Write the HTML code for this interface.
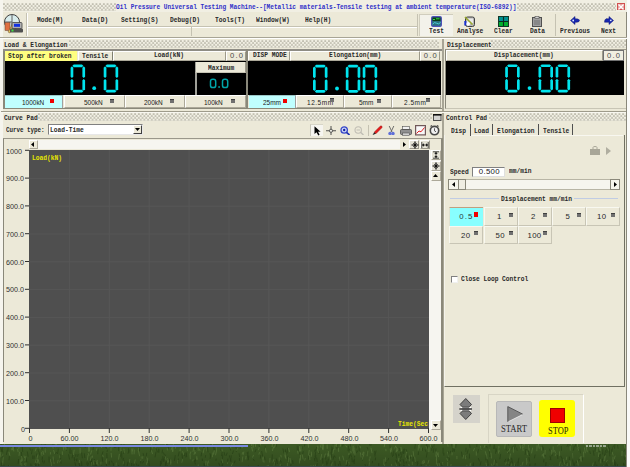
<!DOCTYPE html>
<html><head><meta charset="utf-8">
<style>
*{margin:0;padding:0;box-sizing:border-box}
html,body{width:630px;height:467px;overflow:hidden;background:#F4F3EE}
body{position:relative;font-family:"Liberation Mono",monospace}
.a{position:absolute}
.t{position:absolute;font:bold 7.6px/7px "Liberation Mono",monospace;color:#282828;white-space:nowrap;transform:scaleX(.82);transform-origin:0 0}
.s{position:absolute;font:7.2px/7px "Liberation Sans",sans-serif;color:#303030;white-space:nowrap}
.chk{position:absolute;background-color:#EEEBDE;background-image:radial-gradient(circle at 50% 50%,#B0AD9D 0,#B0AD9D .6px,rgba(176,173,157,0) 1.2px),radial-gradient(circle at 50% 50%,#B0AD9D 0,#B0AD9D .6px,rgba(176,173,157,0) 1.2px);background-size:3.7px 3.7px;background-position:0 0,1.85px 1.85px}
.btn{position:absolute;background:#ECE9D8;border-right:1px solid #ACA899;border-bottom:1px solid #ACA899;border-left:1px solid #FFFFFF;border-top:1px solid #FFFFFF}
.hdr{position:absolute;background:#ECE9D8;border-right:1px solid #9D9A8A;border-bottom:1px solid #ACA899;border-left:1px solid #FFF;border-top:1px solid #FFF}
.blk{position:absolute;background:#000}
.sq{position:absolute;width:4px;height:4px;background:#707070;border-top:1px solid #404040}
.sqr{position:absolute;width:4px;height:4.5px;background:#F00000}
</style></head><body><svg width="0" height="0" style="position:absolute"><defs><pattern id="chkp" width="3.7" height="3.8" patternUnits="userSpaceOnUse"><rect width="3.7" height="3.8" fill="#F2F0E4"/><circle cx=".95" cy="1" r=".85" fill="#A4A292"/><circle cx="2.8" cy="2.9" r=".85" fill="#A4A292"/></pattern></defs></svg>
<!-- window -->
<div class="a" style="left:0;top:0;width:627px;height:444px;background:#ECE9D8;border-right:1px solid #8A887A"></div>
<div class="a" style="left:0;top:0;width:2.5px;height:444px;background:#F6F5EE"></div>
<!-- title bar --><div class="a" style="left:2.5px;top:0;width:624px;height:12px;background:#F1EFE3"></div>
<svg class="a" style="left:2.5px;top:2.5px" width="113" height="8"><rect width="100%" height="100%" fill="url(#chkp)"/></svg>
<div class="t" style="left:116px;top:3.5px;color:#3030C8;transform:scaleX(.806)">Oil Pressure Universal Testing Machine--[Metallic materials-Tensile testing at ambient temperature(ISO-6892)]</div>
<svg class="a" style="left:517px;top:2.5px" width="99" height="8"><rect width="100%" height="100%" fill="url(#chkp)"/></svg>
<div class="a" style="left:617px;top:2.5px;width:8px;height:7.5px;background:#E8A0A0;border:1px solid #D05050"></div>
<svg class="a" style="left:617px;top:2.5px" width="8" height="8"><path d="M1.5 1.5L6.5 6.5M6.5 1.5L1.5 6.5" stroke="#fff" stroke-width="1.3"/></svg>


<!-- toolbar -->
<svg class="a" style="left:3px;top:13px" width="22" height="21" viewBox="0 0 22 21">
 <circle cx="9" cy="9" r="7.5" fill="#D8ECEC" stroke="#404040" stroke-width="1"/>
 <path d="M9 1.5V16.5M1.5 9H9" stroke="#606060" stroke-width="1"/>
 <rect x="2" y="9.5" width="5" height="8" fill="#E07040" stroke="#604030" stroke-width=".5"/>
 <path d="M5 19L10 10L12 11L7 20Z" fill="#E0C060" stroke="#705020" stroke-width=".5"/>
 <rect x="9" y="9.5" width="10" height="6" rx="1" fill="#B0B0B0" stroke="#404040" stroke-width=".8"/>
 <rect x="11" y="10.8" width="6" height="3" fill="#1030E0"/>
 <rect x="7" y="15.5" width="13" height="4" rx="1" fill="#505050"/>
 <rect x="8.5" y="16.5" width="2" height="2" fill="#40E040"/>
</svg>
<div class="a" style="left:26px;top:13px;width:1px;height:23px;background:#C5C2B2"></div>
<div class="a" style="left:27px;top:13px;width:1px;height:23px;background:#FFF"></div>
<div class="t" style="left:37px;top:16.6px">Mode(M)</div>
<div class="t" style="left:82px;top:16.6px">Data(D)</div>
<div class="t" style="left:121px;top:16.6px">Setting(S)</div>
<div class="t" style="left:169.5px;top:16.6px">Debug(D)</div>
<div class="t" style="left:214.5px;top:16.6px">Tools(T)</div>
<div class="t" style="left:256px;top:16.6px">Window(W)</div>
<div class="t" style="left:305px;top:16.6px">Help(H)</div>
<div class="a" style="left:28px;top:26px;width:389px;height:1px;background:#C5C2B2"></div>
<div class="a" style="left:28px;top:27px;width:389px;height:1px;background:#FFF"></div>
<div class="a" style="left:190.5px;top:27px;width:1px;height:9px;background:#C5C2B2"></div>
<div class="a" style="left:417px;top:14px;width:1px;height:22px;background:#C5C2B2"></div>
<!-- Test pressed -->
<div class="a" style="left:419px;top:14px;width:34px;height:22px;background:#F3F2EA;border-left:1px solid #D0CDBD;border-top:1px solid #D0CDBD"></div>
<svg class="a" style="left:431px;top:16px" width="11" height="11"><rect x=".6" y=".6" width="9.8" height="9.8" rx="1.5" fill="#2A7080" stroke="#5050B8" stroke-width="1.2"/><rect x="1.5" y="1.5" width="8" height="3.5" fill="#0C3A18"/><path d="M2 3.5H4M5 2.8H8.5" stroke="#30E040" stroke-width="1"/><path d="M1.5 8.2Q3.5 5.5 5.5 7.2T9.5 6.5" stroke="#50D8E0" stroke-width=".9" fill="none"/></svg>
<div class="t" style="left:428.5px;top:28px">Test</div>
<svg class="a" style="left:464px;top:16px" width="11" height="11"><rect x="1.5" y="1" width="9" height="9.5" rx="2" fill="#B8B8B8" stroke="#404040"/><rect x="3" y="2.5" width="6" height="5" fill="#E8E8E8"/><path d="M1 1L8.5 8.5" stroke="#98A830" stroke-width="1.6"/><rect x=".3" y="5" width="2" height="4.5" fill="#1830D0"/><circle cx="4.2" cy="8" r="1.8" fill="#FFF"/></svg>
<div class="t" style="left:456.5px;top:28px">Analyse</div>
<svg class="a" style="left:497.5px;top:16px" width="11" height="11"><rect x="0" y="0" width="11" height="5.5" fill="#00908F"/><rect x="0" y="5.5" width="11" height="5.5" fill="#00B030"/><path d="M5.5 0V11M0 5.5H11" stroke="#0A2A20" stroke-width="1.1"/><rect x=".5" y=".5" width="10" height="10" fill="none" stroke="#103828"/></svg>
<div class="t" style="left:493.5px;top:28px">Clear</div>
<svg class="a" style="left:532px;top:16px" width="10" height="11"><rect x=".5" y="1.5" width="9" height="9" fill="#A0A0A0" stroke="#505050"/><rect x="3" y=".5" width="4" height="2" fill="#D0D0D0" stroke="#505050" stroke-width=".6"/><path d="M3 4V9M5 4V9M7 4V9" stroke="#707070"/></svg>
<div class="t" style="left:529.5px;top:28px">Data</div>
<div class="a" style="left:555px;top:14px;width:1px;height:22px;background:#C5C2B2"></div>
<svg class="a" style="left:570px;top:16px" width="10" height="9"><path d="M0.5 4.5L5 0.5V2.8Q8 2.5 9.5 4Q9.5 6.2 7 6.2H5V8.5Z" fill="#1828B0" stroke="#0A1070" stroke-width=".5"/><circle cx="3.2" cy="4.5" r=".9" fill="#E0E8FF"/></svg>
<div class="t" style="left:560px;top:28px">Previous</div>
<svg class="a" style="left:603.5px;top:16px" width="10" height="9"><path d="M9.5 4.5L5 0.5V2.8H2Q0.5 3.5 0.5 6.2H5V8.5Z" fill="#1828B0" stroke="#0A1070" stroke-width=".5"/><circle cx="6.8" cy="4.3" r=".9" fill="#E0E8FF"/></svg>
<div class="t" style="left:601px;top:28px">Next</div>
<div class="a" style="left:0;top:37px;width:627px;height:1px;background:#A8A595"></div>
<div class="a" style="left:0;top:38px;width:627px;height:1px;background:#FFF"></div>

<!-- Load & Elongation header -->
<div class="t" style="left:3.5px;top:41.5px">Load &amp; Elongation</div>
<svg class="a" style="left:69px;top:40px" width="370" height="8"><rect width="100%" height="100%" fill="url(#chkp)"/></svg>
<!-- divider between panels -->
<div class="a" style="left:441.5px;top:39px;width:2.5px;height:405px;background:#A8A595"></div>

<!-- left panel frame -->
<div class="a" style="left:3px;top:49px;width:1.6px;height:60px;background:#8A887A"></div><div class="a" style="left:3px;top:49.2px;width:439px;height:59.8px;border-bottom:1px solid #8A887A"></div><div class="a" style="left:3px;top:49.2px;width:439px;height:1.4px;background:#8E8C84"></div>
<!-- row1 -->
<div class="a" style="left:4.6px;top:50.6px;width:72.9px;height:10.4px;background:#FFFF80"></div>
<div class="t" style="left:8px;top:52.5px">Stop after broken</div>
<div class="hdr" style="left:78px;top:50.6px;width:35px;height:10.4px;border-right:1.5px solid #808070"></div>
<div class="t" style="left:82px;top:52.5px">Tensile</div>
<div class="hdr" style="left:113px;top:50.6px;width:113px;height:10.4px"></div>
<div class="t" style="left:154px;top:51.7px">Load(kN)</div>
<div class="hdr" style="left:226px;top:50.6px;width:20px;height:10.4px"></div>
<div class="s" style="left:230px;top:52px;font-size:7.6px;letter-spacing:1.2px;color:#484848">0.0</div>
<div class="a" style="left:246px;top:49px;width:2px;height:59px;background:#8A887A"></div>
<div class="hdr" style="left:248px;top:50.6px;width:42px;height:10.4px"></div>
<div class="t" style="left:252.5px;top:51.7px">DISP MODE</div>
<div class="hdr" style="left:290px;top:50.6px;width:130px;height:10.4px"></div>
<div class="t" style="left:329px;top:51.7px">Elongation(mm)</div>
<div class="hdr" style="left:420px;top:50.6px;width:20px;height:10.4px"></div>
<div class="s" style="left:423.8px;top:52px;font-size:7.6px;letter-spacing:1.2px;color:#484848">0.0</div>
<!-- black displays -->
<div class="blk" style="left:4.6px;top:61px;width:241.4px;height:34px"></div>
<div class="blk" style="left:248px;top:61px;width:192.5px;height:34px"></div>
<!-- maximum -->
<div class="hdr" style="left:195px;top:62px;width:51px;height:11px;border-left:1.5px solid #A0A098;border-top:none;border-bottom:1px solid #C8C5B5"></div><div class="a" style="left:195px;top:73px;width:1.5px;height:22px;background:#A0A098"></div>
<div class="t" style="left:208px;top:64.5px">Maximum</div>
<svg class="a" style="left:209px;top:78px" width="21" height="11"><g fill="none" stroke="#00A4A8" stroke-width="1.5"><rect x="1.5" y="1.2" width="5.2" height="8.4" rx="2.2"/><rect x="13.5" y="1.2" width="5.2" height="8.4" rx="2.2"/></g><rect x="9.3" y="8.2" width="1.6" height="1.6" fill="#00A4A8"/></svg>
<!-- row3 buttons -->
<div class="a" style="left:4.6px;top:95px;width:58.9px;height:13px;background:#C0FFFF;border-right:1px solid #A0A0A0;border-top:1px solid #9CC8C8"></div>
<div class="s" style="left:22px;top:98.5px;color:#202020;transform:scaleX(.9);transform-origin:0 0">1000kN</div><div class="sqr" style="left:49.5px;top:98.5px"></div>
<div class="btn" style="left:63.5px;top:95px;width:61px;height:13px"></div>
<div class="s" style="left:83.5px;top:98.5px;color:#202020;transform:scaleX(.9);transform-origin:0 0">500kN</div><div class="sq" style="left:109.5px;top:98.5px"></div>
<div class="btn" style="left:124.5px;top:95px;width:60px;height:13px"></div>
<div class="s" style="left:144px;top:98.5px;color:#202020;transform:scaleX(.9);transform-origin:0 0">200kN</div><div class="sq" style="left:170px;top:98.5px"></div>
<div class="btn" style="left:184.5px;top:95px;width:61.5px;height:13px"></div>
<div class="s" style="left:204px;top:98.5px;color:#202020;transform:scaleX(.9);transform-origin:0 0">100kN</div><div class="sq" style="left:230.5px;top:98.5px"></div>
<div class="a" style="left:248.5px;top:95px;width:47px;height:13px;background:#C0FFFF;border-right:1px solid #A0A0A0;border-top:1px solid #9CC8C8"></div>
<div class="s" style="left:263px;top:98.5px;color:#202020;transform:scaleX(.9);transform-origin:0 0">25mm</div><div class="sqr" style="left:282.5px;top:98.5px"></div>
<div class="btn" style="left:295.5px;top:95px;width:48px;height:13px"></div>
<div class="s" style="left:307px;top:98.5px;color:#202020;transform:scaleX(.9);transform-origin:0 0;letter-spacing:.6px">12.5mm</div><div class="sq" style="left:329.5px;top:98px"></div>
<div class="btn" style="left:343.5px;top:95px;width:48px;height:13px"></div>
<div class="s" style="left:359px;top:98.5px;color:#202020;transform:scaleX(.9);transform-origin:0 0">5mm</div><div class="sq" style="left:377px;top:98.5px"></div>
<div class="btn" style="left:391.5px;top:95px;width:49px;height:13px"></div>
<div class="s" style="left:404px;top:98.5px;color:#202020;transform:scaleX(.9);transform-origin:0 0;letter-spacing:.6px">2.5mm</div><div class="sq" style="left:425.5px;top:98px"></div>

<!-- right panel: displacement -->
<div class="t" style="left:446.5px;top:42px">Displacement</div>
<svg class="a" style="left:491px;top:40px" width="135" height="8"><rect width="100%" height="100%" fill="url(#chkp)"/></svg>
<div class="a" style="left:445px;top:48.5px;width:181px;height:60.5px;border-left:1px solid #8A887A;border-top:1px solid #9A978A;border-bottom:1px solid #C8C5B5"></div>
<div class="hdr" style="left:446px;top:50px;width:157px;height:10.5px"></div>
<div class="t" style="left:493.5px;top:51.7px">Displacement(mm)</div>
<div class="hdr" style="left:603px;top:50px;width:21px;height:10.5px;border:1px solid #707070;background:#F0EEE2"></div>
<div class="s" style="left:607px;top:52px;font-size:7.6px;letter-spacing:1.2px;color:#484848">0.0</div>
<div class="blk" style="left:446px;top:60.5px;width:178px;height:34px"></div>

<!-- seven segment digits -->
<svg class="a" style="left:0;top:0" width="630" height="100">
<defs>
<g id="d0" fill="#00E4EE"><polygon points="1.80,1.35 3.15,0.00 11.35,0.00 12.70,1.35 11.35,2.70 3.15,2.70"/><polygon points="1.80,26.65 3.15,25.30 11.35,25.30 12.70,26.65 11.35,28.00 3.15,28.00"/><polygon points="1.35,1.80 2.70,3.15 2.70,12.20 1.35,13.55 0.00,12.20 0.00,3.15"/><polygon points="1.35,14.45 2.70,15.80 2.70,24.85 1.35,26.20 0.00,24.85 0.00,15.80"/><polygon points="13.15,1.80 14.50,3.15 14.50,12.20 13.15,13.55 11.80,12.20 11.80,3.15"/><polygon points="13.15,14.45 14.50,15.80 14.50,24.85 13.15,26.20 11.80,24.85 11.80,15.80"/></g>
</defs>
<use href="#d0" x="70.6" y="64.5"/>
<circle cx="94.2" cy="88.2" r="1.9" fill="#00E4EE"/>
<use href="#d0" x="103.7" y="64.5"/>
<use href="#d0" x="313" y="64.7"/>
<circle cx="337" cy="88.5" r="1.9" fill="#00E4EE"/>
<use href="#d0" x="345.8" y="64.7"/>
<use href="#d0" x="362.7" y="64.7"/>
<use href="#d0" x="505.2" y="64.4"/>
<circle cx="529.5" cy="88.1" r="1.9" fill="#00E4EE"/>
<use href="#d0" x="538.5" y="64.4"/>
<use href="#d0" x="555.6" y="64.4"/>
</svg>


<!-- separator lines under panels -->
<div class="a" style="left:1px;top:111px;width:625px;height:1.2px;background:#9E9B8B"></div><div class="a" style="left:1px;top:112.2px;width:625px;height:.8px;background:#F8F7F0"></div>
<!-- Curve Pad header -->
<div class="t" style="left:3.5px;top:114.5px">Curve Pad</div>
<svg class="a" style="left:38px;top:113px" width="394" height="8"><rect width="100%" height="100%" fill="url(#chkp)"/></svg>
<svg class="a" style="left:433px;top:114px" width="8.5" height="7"><rect x=".5" y=".5" width="7.5" height="6" fill="#D4D4D2" stroke="#505050"/><rect x="0" y="0" width="8.5" height="1.6" fill="#101010"/></svg>
<!-- Control pad header -->
<div class="t" style="left:446px;top:115px">Control Pad</div>
<svg class="a" style="left:489px;top:113px" width="137" height="8"><rect width="100%" height="100%" fill="url(#chkp)"/></svg>

<!-- curve type -->
<div class="t" style="left:6px;top:126.5px;transform:scaleX(.77)">Curve type:</div>
<div class="a" style="left:48px;top:124px;width:95px;height:11px;background:#FFF;border-left:1px solid #808080;border-top:1px solid #808080;border-right:1px solid #E8E8E8;border-bottom:1px solid #E8E8E8"></div>
<div class="t" style="left:50px;top:127px">Load-Time</div>
<div class="btn" style="left:133px;top:125px;width:9px;height:9px;border-right-color:#404040;border-bottom-color:#404040"></div>
<svg class="a" style="left:135px;top:128px" width="6" height="4"><path d="M0 0H5L2.5 3Z" fill="#000"/></svg>

<!-- chart toolbar icons -->
<div class="a" style="left:309.5px;top:123.5px;width:13.5px;height:12.5px;background:#F6F5F0;border-left:1px solid #C8C6B8;border-top:1px solid #D8D6C8"></div>
<svg class="a" style="left:313.5px;top:126px" width="7" height="10"><path d="M0.5 0.3V8L2.5 6.3L4.3 9.5L5.6 8.8L4 5.8H6.6Z" fill="#000"/></svg>
<svg class="a" style="left:326px;top:125.5px" width="10" height="9.5"><path d="M5 0V9.5M0 4.75H10" stroke="#404040" stroke-width=".9"/><circle cx="5" cy="4.75" r="1.6" fill="#E8E8E0" stroke="#404040" stroke-width=".8"/></svg>
<svg class="a" style="left:339.5px;top:125.5px" width="10" height="9.5"><circle cx="4.2" cy="4" r="3.2" fill="#D0D8F8" stroke="#3848C8" stroke-width="1.3"/><circle cx="4.2" cy="4" r="1.2" fill="#1020A0"/><path d="M6.5 6.3L9.5 9" stroke="#2030B0" stroke-width="1.6"/></svg>
<svg class="a" style="left:353.5px;top:125.5px" width="10" height="9.5"><circle cx="4.2" cy="4" r="3.2" fill="none" stroke="#C0BEB4" stroke-width="1.1"/><path d="M2.5 4H6" stroke="#C0BEB4"/><path d="M6.5 6.3L9.5 9" stroke="#C0BEB4" stroke-width="1.4"/></svg>
<div class="a" style="left:368px;top:125px;width:1px;height:11px;background:#C5C2B2"></div>
<svg class="a" style="left:372px;top:125px" width="11" height="10.5"><path d="M2.2 7.2L8.2 1.2Q9 .5 9.8 1.2Q10.5 2 9.8 2.8L3.8 8.8Z" fill="#E81818" stroke="#901010" stroke-width=".5"/><path d="M2.2 7.2L.6 10L3.8 8.8Z" fill="#202020"/></svg>
<svg class="a" style="left:388px;top:125.5px" width="7" height="9.5"><path d="M1.2 0L4 6M5.8 0L3 6" stroke="#606060" stroke-width=".9"/><circle cx="2" cy="7.5" r="1.7" fill="#6070D8"/><circle cx="5" cy="7.5" r="1.7" fill="#6070D8"/></svg>
<svg class="a" style="left:400px;top:125.5px" width="12" height="10"><rect x="2.5" y="0.5" width="7" height="3" fill="#F0F0F0" stroke="#505050" stroke-width=".6"/><rect x=".5" y="3.5" width="11" height="5" rx="1" fill="#909090" stroke="#404040" stroke-width=".7"/><rect x="2.5" y="7" width="7" height="2.5" fill="#D0D0D0" stroke="#404040" stroke-width=".5"/></svg>
<svg class="a" style="left:414.5px;top:125px" width="11" height="10.5"><rect x=".6" y=".6" width="9.8" height="9.3" fill="#F8F8F8" stroke="#705858" stroke-width="1.2"/><path d="M1.5 8.5L4 6L6 6.8L9.5 2.5" stroke="#E02020" fill="none" stroke-width="1"/></svg>
<svg class="a" style="left:428.5px;top:125px" width="11" height="10.5"><circle cx="5.5" cy="5.6" r="4.2" fill="#F0F0F0" stroke="#484848" stroke-width="1.6"/><path d="M5.5 3.3V5.8L7 6.8" stroke="#303030" stroke-width=".8" fill="none"/><path d="M1.5 1.5L3 .5M9.5 1.5L8 .5" stroke="#484848" stroke-width="1.2"/></svg>

<!-- chart frame -->
<div class="a" style="left:3px;top:137.5px;width:440px;height:304px;border-left:1px solid #8A887A;border-top:1px solid #9A978A;border-right:2px solid #8A887A"></div>
<div class="a" style="left:38px;top:139.5px;width:362px;height:9.5px;background:#F6F5F0"></div>
<div class="btn" style="left:28.5px;top:139.5px;width:9.5px;height:9.5px"></div>
<svg class="a" style="left:31px;top:141.5px" width="4" height="6"><path d="M3 0V5L0 2.5Z" fill="#000"/></svg>
<div class="btn" style="left:400px;top:139.5px;width:9px;height:9.5px;border:none"></div>
<svg class="a" style="left:403px;top:141.5px" width="4" height="6"><path d="M0 0V5L3 2.5Z" fill="#000"/></svg>
<div class="btn" style="left:409px;top:139.5px;width:10px;height:9.5px;background:#E4E2D6;border-right-color:#9A978A;border-bottom-color:#9A978A"></div>
<svg class="a" style="left:410.5px;top:140.5px" width="8" height="8"><path d="M4 0.5V7.5M0.5 4H7.5" stroke="#000" stroke-width="1.2"/><path d="M2 2L6 6M6 2L2 6" stroke="#000" stroke-width=".6"/></svg>
<div class="btn" style="left:419.5px;top:139.5px;width:10px;height:9.5px;background:#E4E2D6;border-right-color:#9A978A;border-bottom-color:#9A978A"></div>
<svg class="a" style="left:421px;top:140.5px" width="8" height="8"><path d="M0.8 1V7M7.2 1V7M1 4H7" stroke="#202020" stroke-width=".8"/><path d="M1 4L3 2.3V5.7ZM7 4L5 2.3V5.7Z" fill="#202020"/></svg>
<!-- dark plot -->
<div class="a" style="left:29px;top:149.5px;width:400px;height:279px;background:#4F4F4F;
background-image:linear-gradient(90deg,transparent 0,transparent 0);"></div>
<svg class="a" style="left:29px;top:149.5px" width="400" height="279">
<g stroke="#575757" stroke-width="1">
<path d="M40.4 0V279M80.3 0V279M120.2 0V279M160.1 0V279M200 0V279M239.9 0V279M279.8 0V279M319.7 0V279M359.6 0V279"/>
<path d="M0 28.4H400M0 56.2H400M0 84H400M0 111.8H400M0 139.6H400M0 167.4H400M0 195.2H400M0 223H400M0 250.8H400"/>
</g>
</svg>
<div class="t" style="left:32px;top:154.5px;color:#E8E800">Load(kN)</div>
<div class="t" style="left:397.5px;top:420.5px;color:#E8E800">Time(Sec</div>
<!-- right vertical strip -->
<div class="a" style="left:429px;top:149.5px;width:12px;height:280px;background:#F6F5F0"></div>
<div class="btn" style="left:430.5px;top:149.5px;width:10px;height:10px;background:#E4E2D6"></div>
<svg class="a" style="left:432px;top:150.5px" width="8" height="8"><path d="M1 0.8H7M1 7.2H7M4 1V7" stroke="#202020" stroke-width=".8"/><path d="M4 1L2.3 3H5.7ZM4 7L2.3 5H5.7Z" fill="#202020"/></svg>
<div class="btn" style="left:430.5px;top:160.5px;width:10px;height:10px;background:#E4E2D6"></div>
<svg class="a" style="left:432px;top:161.5px" width="8" height="8"><path d="M4 0.5V7.5M0.5 4H7.5" stroke="#000" stroke-width="1.2"/><path d="M2 2L6 6M6 2L2 6" stroke="#000" stroke-width=".6"/></svg>
<div class="btn" style="left:430.5px;top:171px;width:10px;height:9.5px"></div>
<svg class="a" style="left:433px;top:174px" width="5" height="3"><path d="M0 3H5L2.5 0Z" fill="#000"/></svg>
<div class="btn" style="left:431px;top:420px;width:9.5px;height:9.5px"></div>
<svg class="a" style="left:433px;top:423.5px" width="5" height="3"><path d="M0 0H5L2.5 3Z" fill="#000"/></svg>
<!-- y axis labels -->
<div class="s" style="left:6px;top:147.7px">1000</div>
<div class="s" style="left:6px;top:175.2px">900.0</div>
<div class="s" style="left:6px;top:203.0px">800.0</div>
<div class="s" style="left:6px;top:230.8px">700.0</div>
<div class="s" style="left:6px;top:258.6px">600.0</div>
<div class="s" style="left:6px;top:286.4px">500.0</div>
<div class="s" style="left:6px;top:314.2px">400.0</div>
<div class="s" style="left:6px;top:342.0px">300.0</div>
<div class="s" style="left:6px;top:369.8px">200.0</div>
<div class="s" style="left:6px;top:397.6px">100.0</div>
<div class="s" style="left:21px;top:426px">0</div>
<svg class="a" style="left:24px;top:148px" width="6" height="282"><g stroke="#303030" stroke-width="1"><path d="M1 2.3H5M1 30.1H5M1 57.9H5M1 85.7H5M1 113.5H5M1 141.3H5M1 169.1H5M1 196.9H5M1 224.7H5M1 252.5H5M1 280.3H5"/></g></svg>
<svg class="a" style="left:26px;top:428px" width="406" height="6"><g stroke="#303030" stroke-width="1"><path d="M3.5 0V5M43.4 0V5M83.3 0V5M123.2 0V5M163.1 0V5M203 0V5M242.9 0V5M282.8 0V5M322.7 0V5M362.6 0V5M402.5 0V5"/></g></svg>
<div class="s" style="left:28.5px;top:434.5px">0</div>
<div class="s" style="left:60.5px;top:434.5px">60.00</div>
<div class="s" style="left:100.5px;top:434.5px">120.0</div>
<div class="s" style="left:140.5px;top:434.5px">180.0</div>
<div class="s" style="left:180.5px;top:434.5px">240.0</div>
<div class="s" style="left:220.5px;top:434.5px">300.0</div>
<div class="s" style="left:260.5px;top:434.5px">360.0</div>
<div class="s" style="left:300.5px;top:434.5px">420.0</div>
<div class="s" style="left:340.5px;top:434.5px">480.0</div>
<div class="s" style="left:380px;top:434.5px">540.0</div>
<div class="s" style="left:419.5px;top:434.5px">600.0</div>

<!-- control pad -->
<div class="t" style="left:450.5px;top:127.5px">Disp</div>
<div class="a" style="left:469.5px;top:124px;width:1.5px;height:12px;background:#505050"></div>
<div class="t" style="left:474px;top:127.5px">Load</div>
<div class="a" style="left:491.5px;top:124px;width:1.5px;height:12px;background:#505050"></div>
<div class="t" style="left:497px;top:127.5px">Elongation</div>
<div class="a" style="left:537.5px;top:124px;width:1.5px;height:12px;background:#505050"></div>
<div class="t" style="left:542.5px;top:127.5px">Tensile</div>
<div class="a" style="left:571.5px;top:124px;width:1.5px;height:12px;background:#505050"></div>
<div class="a" style="left:444px;top:135px;width:181px;height:252px;border-left:1px solid #F4F3EC;border-top:none;border-right:1.5px solid #707062;border-bottom:1.5px solid #707062"></div><div class="a" style="left:471px;top:135px;width:152px;height:1px;background:#F8F7F0"></div>
<svg class="a" style="left:589.5px;top:146px" width="10" height="9"><path d="M3 3V1.5Q3 0.5 5 0.5Q7 0.5 7 1.5V3" stroke="#A8A698" fill="none"/><rect x="0" y="3" width="10" height="6" fill="#A8A698"/></svg>
<svg class="a" style="left:606px;top:146.5px" width="5" height="8"><path d="M0 0V8L5 4Z" fill="#B0AEA0"/></svg>
<div class="t" style="left:450px;top:169px">Speed</div>
<div class="a" style="left:471.5px;top:166.5px;width:33.5px;height:10px;background:#FFF;border-left:1px solid #808080;border-top:1px solid #808080;border-right:1px solid #E0E0E0;border-bottom:1px solid #E0E0E0"></div>
<div class="s" style="left:478.8px;top:168px;font-size:7.8px;color:#202020;letter-spacing:.3px">0.500</div>
<div class="t" style="left:508.5px;top:168.3px">mm/min</div>
<div class="a" style="left:448px;top:179px;width:172px;height:10.5px;background:#F6F5EE;border:1px solid #B8B5A5"></div>
<div class="a" style="left:448.3px;top:179px;width:10.5px;height:10.5px;background:#F6F5EC;border:1.2px solid #8A887A"></div>
<svg class="a" style="left:452px;top:182px" width="3" height="5"><path d="M3 0V5L0 2.5Z" fill="#000"/></svg>
<div class="a" style="left:457.6px;top:179px;width:8.4px;height:10.5px;background:#EFEDE2;border:1.2px solid #8A887A"></div>
<div class="a" style="left:609.5px;top:179px;width:10.5px;height:10.5px;background:#F6F5EC;border:1.2px solid #8A887A"></div>
<svg class="a" style="left:613.5px;top:182px" width="3" height="5"><path d="M0 0V5L3 2.5Z" fill="#000"/></svg>
<div class="a" style="left:450px;top:197.5px;width:48.5px;height:1px;background:#C0CCE4"></div>
<div class="t" style="left:500.5px;top:195.5px">Displacement mm/min</div>
<div class="a" style="left:574px;top:197.5px;width:43.5px;height:1px;background:#C0CCE4"></div>
<!-- speed buttons -->
<div class="a" style="left:449px;top:207px;width:34px;height:18.5px;background:#88FFFF;border-top:1px solid #C0A080;border-left:1px solid #E0E0D0"></div>
<div class="s" style="left:459.3px;top:213px;font-size:7.8px;color:#283838;letter-spacing:1.1px">0.5</div><div class="sqr" style="left:474.3px;top:212px"></div>
<div class="btn" style="left:483.5px;top:207px;width:34px;height:18.5px;border-color:#F8F8F0 #C8C5B5 #C8C5B5 #F8F8F0"></div>
<div class="s" style="left:497px;top:213px;font-size:7.8px;color:#282828;letter-spacing:.3px">1</div><div class="sq" style="left:508.5px;top:212.5px"></div>
<div class="btn" style="left:517.5px;top:207px;width:34.5px;height:18.5px;border-color:#F8F8F0 #C8C5B5 #C8C5B5 #F8F8F0"></div>
<div class="s" style="left:531px;top:213px;font-size:7.8px;color:#282828;letter-spacing:.3px">2</div><div class="sq" style="left:542.5px;top:212.5px"></div>
<div class="btn" style="left:552px;top:207px;width:34px;height:18.5px;border-color:#F8F8F0 #C8C5B5 #C8C5B5 #F8F8F0"></div>
<div class="s" style="left:565.5px;top:213px;font-size:7.8px;color:#282828;letter-spacing:.3px">5</div><div class="sq" style="left:577px;top:212.5px"></div>
<div class="btn" style="left:586px;top:207px;width:33.5px;height:18.5px;border-color:#F8F8F0 #C8C5B5 #C8C5B5 #F8F8F0"></div>
<div class="s" style="left:597px;top:213px;font-size:7.8px;color:#282828;letter-spacing:.3px">10</div><div class="sq" style="left:611px;top:212.5px"></div>
<div class="btn" style="left:449px;top:226px;width:34px;height:18px;border-color:#F8F8F0 #C8C5B5 #C8C5B5 #F8F8F0"></div>
<div class="s" style="left:461px;top:231.5px;font-size:7.8px;color:#282828;letter-spacing:.3px">20</div><div class="sq" style="left:474px;top:231px"></div>
<div class="btn" style="left:483.5px;top:226px;width:34px;height:18px;border-color:#F8F8F0 #C8C5B5 #C8C5B5 #F8F8F0"></div>
<div class="s" style="left:495.5px;top:231.5px;font-size:7.8px;color:#282828;letter-spacing:.3px">50</div><div class="sq" style="left:508.5px;top:231px"></div>
<div class="btn" style="left:517.5px;top:226px;width:34.5px;height:18px;border-color:#F8F8F0 #C8C5B5 #C8C5B5 #F8F8F0"></div>
<div class="s" style="left:527.5px;top:231.5px;font-size:7.8px;color:#282828;letter-spacing:.3px">100</div><div class="sq" style="left:542.5px;top:231px"></div>
<!-- close loop -->
<div class="a" style="left:450.5px;top:275.5px;width:7px;height:7px;background:#FFF;border-left:1px solid #808080;border-top:1px solid #808080;border-right:1px solid #F0F0F0;border-bottom:1px solid #F0F0F0"></div>
<div class="t" style="left:461px;top:276px">Close Loop Control</div>

<!-- bottom controls -->
<div class="a" style="left:453px;top:395px;width:27px;height:28px;background:#D5D3CB"></div>
<svg class="a" style="left:458.8px;top:397.8px" width="13.5" height="22"><g fill="#7C7C7C" stroke="#2A2A2A" stroke-width=".8" stroke-linejoin="round"><path d="M6.75 .5L12.5 6.5L10.3 8.8H3.2L1 6.5Z"/><path d="M6.75 21.5L12.5 15.5L10.3 13.2H3.2L1 15.5Z"/></g><rect x="3.3" y="8.6" width="6.9" height="4.8" fill="#7C7C7C"/><rect x=".3" y="10.2" width="12.9" height="1.6" fill="#484848"/><rect x="1.5" y="9" width="1.6" height="1" fill="#FFF"/><rect x="10.4" y="9" width="1.6" height="1" fill="#FFF"/><rect x="1.5" y="12" width="1.6" height="1" fill="#FFF"/><rect x="10.4" y="12" width="1.6" height="1" fill="#FFF"/></svg>
<div class="a" style="left:487.5px;top:394px;width:96px;height:49px;border:1px solid #D8D5C5;border-right-color:#FFF;border-bottom:none"></div>
<div class="a" style="left:496px;top:400.5px;width:36px;height:36px;background:#C9C9C9;border-radius:2px;border:1px solid #B8B8B8"></div>
<svg class="a" style="left:507px;top:405.5px" width="16.5" height="16.5"><path d="M.8 .6V15.8L15.8 8.2Z" fill="#858585"/><path d="M.8 15.8V.6L15.8 8.2" fill="none" stroke="#505050" stroke-width=".9"/><path d="M1.5 15.6L15.6 8.6" stroke="#F0F0F0" stroke-width=".7"/></svg>
<div class="a" style="left:501px;top:423.5px;font:10px/9px 'Liberation Serif',serif;color:#282828;white-space:nowrap;transform:scaleX(.86);transform-origin:0 0">START</div>
<div class="a" style="left:538.5px;top:400px;width:36.5px;height:36.5px;background:#FFFF00;border-radius:3px"></div>
<div class="a" style="left:550px;top:408px;width:14.5px;height:15px;background:#F00000;border:1px solid #A00000"></div>
<div class="a" style="left:548px;top:426px;font:10px/9px 'Liberation Serif',serif;color:#282808;white-space:nowrap;transform:scaleX(.84);transform-origin:0 0">STOP</div>

<!-- desktop -->
<svg class="a" style="left:0;top:444px" width="630" height="23"><rect width="630" height="23" fill="#3F5E26"/><path d="M204.0 1.8l-1.0 4.6M230.4 -0.6l-1.1 4.0M44.0 0.3l0.8 3.7M140.6 13.7l0.2 5.8M615.0 -0.8l-0.5 5.4M402.5 7.3l-1.0 4.2M285.5 5.5l0.5 5.2M361.9 11.1l0.6 5.5M617.5 1.0l0.6 3.7M179.3 7.6l-1.1 4.7M105.9 0.9l0.6 2.2M156.0 7.8l-1.0 5.5M346.1 20.1l0.9 5.3M261.6 7.0l1.1 5.5M247.2 8.0l0.3 2.4M42.4 3.2l-0.4 2.6M0.1 1.8l-0.3 2.4M550.8 13.4l-0.6 2.6M229.4 1.1l1.2 5.4M304.8 0.1l-0.4 2.4M522.2 2.0l1.1 2.1M543.9 15.4l-0.3 3.0M486.3 11.3l-0.4 5.1M466.1 3.7l-0.3 4.1M281.8 21.4l1.1 6.0M92.1 18.7l0.4 5.9M163.4 8.5l1.0 2.5M316.0 11.3l-1.2 4.1M115.4 -1.9l-0.8 5.2M494.1 0.7l-0.6 4.2M529.2 1.4l-0.1 2.5M609.6 3.5l-0.2 5.8M623.6 18.8l-0.2 2.6M213.6 2.9l0.5 3.3M66.0 4.6l0.7 2.2M81.6 8.6l0.8 5.6M94.1 21.0l0.5 4.3M399.7 18.0l0.9 2.3M168.8 1.2l-0.6 4.1M101.7 -0.7l-0.5 2.8M478.5 5.2l-0.8 4.0M272.3 10.4l-0.3 5.3M400.7 8.1l-1.1 3.4M44.6 16.5l-0.8 3.0M530.0 19.8l-0.5 4.7M184.6 9.5l-0.1 2.6M195.0 6.9l-0.3 2.0M316.7 3.0l-1.2 4.0M56.5 8.0l-1.1 2.2M561.9 13.7l0.7 4.9M368.0 20.3l0.5 4.7M351.9 13.7l0.4 4.5M2.1 17.9l0.0 5.0M415.4 -0.3l-0.6 4.9M388.7 14.1l-0.8 2.3M468.2 5.6l-1.2 4.3M169.3 14.8l0.4 4.8M125.5 22.5l-1.2 5.7M516.5 22.2l-0.6 3.8M595.7 3.3l-0.9 4.3M443.1 3.8l-0.0 5.6M2.3 10.3l-0.5 3.8M227.2 8.7l-1.1 3.1M525.8 5.1l-0.6 5.7M511.5 13.8l1.1 5.7M406.0 5.2l1.0 2.2M163.9 14.4l0.1 3.2M105.4 2.0l1.0 2.8M138.6 20.7l-0.1 6.0M121.2 0.3l-1.0 3.4M162.8 12.2l0.6 5.5M260.7 11.1l-0.4 3.5M543.6 3.4l-0.6 3.1M280.9 21.8l0.9 5.4M612.5 4.2l-0.8 2.4M288.1 11.8l0.7 2.2M579.5 14.1l-0.9 3.2M400.9 15.5l-1.0 2.4M367.2 7.7l0.2 2.9M193.7 -1.5l0.4 4.0M162.1 14.7l-0.7 5.7M465.7 10.6l1.1 2.8M516.6 3.8l0.6 2.9M599.7 10.4l-0.7 2.7M419.1 21.7l-0.3 2.6M613.7 1.5l-1.1 2.2M207.4 2.6l0.6 5.7M418.6 7.5l-0.4 3.5M1.8 5.0l1.1 3.4M121.6 7.1l-1.1 5.6M511.4 17.2l-1.1 2.2M579.6 4.4l1.0 5.0M399.4 21.6l-0.6 2.1M602.8 21.8l-0.6 3.5M518.3 17.3l-0.4 4.4M155.8 -0.4l0.1 2.1M617.6 20.1l-0.6 6.0M60.7 10.5l-0.1 4.8M235.0 16.5l-0.6 2.8M96.6 20.1l-0.4 4.3M576.1 -1.0l-0.9 3.2M282.9 4.5l1.1 5.1M375.6 13.5l-0.3 2.9M128.5 4.4l0.4 4.4M7.2 6.2l-0.8 4.7M128.1 17.9l-1.0 4.2M249.0 11.8l-1.0 4.6M627.9 7.1l0.5 2.8M3.7 20.5l0.8 3.7M403.6 20.7l0.3 2.4M68.5 10.3l1.1 5.2M79.8 21.6l-0.0 5.9M522.4 2.6l-0.2 2.9M74.2 13.0l0.3 4.2M264.6 12.6l0.4 3.7M276.2 -1.4l-0.0 4.5M481.0 17.5l-0.8 3.8M67.5 1.2l-1.0 3.7M489.9 10.8l0.0 2.2M577.1 2.1l1.0 5.2M221.1 16.9l1.0 2.6M513.8 1.6l1.0 4.0M165.6 10.7l-1.1 3.3M101.6 21.4l0.9 4.7M494.5 0.9l0.3 4.1M550.0 11.9l0.9 4.3M625.6 13.7l0.7 3.6M624.0 12.4l0.6 3.4M111.4 16.6l0.8 2.2M402.7 22.6l0.4 4.3M1.1 -1.2l0.3 2.6M14.0 -1.9l-0.9 3.4M299.2 1.4l-0.6 5.7M60.4 14.0l0.7 5.5M166.5 -1.7l0.1 4.6M406.7 9.1l0.6 5.7M569.2 -0.9l-0.2 4.1M512.4 2.4l-0.5 3.2M469.5 9.6l-0.1 5.0M608.0 3.4l-1.2 5.5M148.7 16.6l0.6 5.8M91.1 -1.3l1.0 2.4M439.1 16.4l0.2 2.3M576.1 21.6l-0.7 2.4M129.1 6.0l-1.1 3.7M317.4 19.3l-1.1 4.5M275.0 17.3l0.5 3.4M136.4 19.6l0.8 2.4M0.8 3.1l1.1 5.0M309.2 10.3l-0.8 5.2M218.7 18.8l1.1 3.0M224.0 8.0l0.9 3.6M315.7 7.5l-0.6 5.5M334.9 16.9l0.4 5.0M106.8 9.0l0.2 5.1M291.1 20.1l-0.7 3.0M443.0 19.1l-0.8 2.6M205.7 11.1l-0.4 2.6M614.3 16.2l1.1 2.4M242.1 22.6l0.6 5.2M123.6 13.9l-0.7 2.4M21.4 8.0l0.5 5.2M398.4 9.6l0.2 2.6M441.0 19.3l0.3 4.7M449.3 13.7l-0.2 3.0M391.6 8.2l1.0 4.7M322.7 14.0l0.1 5.3M77.1 22.6l-1.1 3.4M332.1 3.5l-0.3 5.2M81.5 17.4l0.3 5.2M515.8 18.4l-0.5 3.9M78.9 18.8l0.8 3.4M237.0 4.3l-0.8 3.7M454.7 5.0l-0.5 3.0M88.5 18.8l-1.2 4.5M599.6 14.4l-1.0 3.0M421.1 20.3l0.8 5.2M349.7 4.6l-0.9 2.9M36.8 9.7l-0.0 2.6M339.9 19.6l0.8 2.0M354.4 14.6l-0.3 5.4M605.2 -0.1l0.3 4.5M393.9 6.5l-0.3 5.4M331.1 17.3l-0.2 2.8M349.0 18.7l0.8 3.2M343.6 -0.8l-1.2 3.2M162.5 5.6l-0.4 3.7M404.3 21.3l0.2 2.2M74.9 18.3l1.0 4.3M299.5 8.3l0.3 2.4M95.6 -1.6l0.4 2.0M608.8 0.2l-0.9 5.5M453.2 4.1l-0.8 4.9M487.6 15.8l0.6 5.4M396.0 15.7l1.0 3.8M514.9 -0.0l0.6 3.2M276.4 14.9l0.7 2.6M595.3 17.6l-0.5 4.3M615.8 18.8l-0.5 4.4M508.7 5.1l-0.6 2.0M508.4 15.1l-0.4 5.7M147.4 13.2l-0.1 4.7M160.5 16.8l-0.1 5.2M557.6 11.0l0.2 3.9M235.6 0.7l0.7 4.5M376.2 6.6l-1.2 4.1M624.0 19.7l0.2 3.9M607.0 4.3l-0.7 2.2M52.7 -0.7l0.9 4.2M596.7 20.7l0.2 2.3M602.5 14.7l-0.1 3.6M608.4 22.8l-1.1 2.9M221.8 20.6l0.8 5.6M495.4 15.7l1.2 4.6M91.2 16.9l0.4 5.8M372.6 16.9l-0.4 2.4M78.2 10.0l-0.6 2.7M426.9 -1.7l-0.7 4.9M395.9 9.3l0.8 3.4M348.6 1.6l-0.6 5.5M98.1 4.8l-0.4 5.4M35.8 20.4l-0.7 4.7M36.2 16.2l1.1 3.2M331.7 2.6l1.0 3.7M123.9 -0.0l0.3 2.3M367.2 3.1l0.6 2.3M544.6 10.3l1.0 2.1M549.4 4.7l0.8 2.7M103.0 7.3l-1.2 4.4M38.6 19.8l-0.0 5.8M334.2 11.4l1.1 2.1M114.9 0.6l0.8 3.0M451.8 -0.9l-0.0 2.5M542.5 1.7l0.6 4.3M331.1 7.9l0.7 5.8M575.0 18.4l-1.1 5.4M229.6 11.3l-0.2 2.3M398.9 18.2l0.9 5.5M404.2 4.6l-0.5 4.7M582.4 13.5l0.0 3.0M599.0 5.2l0.4 3.2M374.4 21.9l-0.6 4.1M336.3 1.7l-0.9 2.5M256.1 5.2l-1.0 3.0M529.0 13.2l0.4 4.3M447.5 9.5l0.3 4.2M195.6 4.1l0.0 2.9M369.0 -1.7l0.9 3.4M350.7 10.3l1.2 3.1M486.4 2.0l0.9 2.3M39.1 7.7l0.6 3.8M141.9 22.0l-0.8 5.0M326.2 16.5l0.6 5.0M239.1 9.3l0.5 3.8M535.2 10.5l-0.8 3.8M204.0 19.1l1.1 5.4M326.0 10.9l-0.3 4.7M374.7 6.8l0.4 5.8M627.6 6.6l0.8 4.1M200.4 22.5l0.0 5.3M265.2 1.9l0.0 3.2M118.5 2.6l0.2 4.5M259.0 1.0l0.6 2.6M508.2 -0.4l0.6 2.0M450.7 6.8l-0.6 2.7M569.4 12.6l-0.1 3.4M34.4 20.3l1.1 4.3M604.8 10.4l-0.6 5.8M452.6 3.5l0.9 3.2M499.4 4.1l-0.3 2.7M612.1 5.3l-0.9 4.2M221.3 4.1l-0.5 2.8M58.4 4.7l-0.9 5.3M237.4 22.0l1.1 2.8M143.2 9.3l0.5 2.5M133.9 19.8l0.0 2.5M202.3 14.6l0.1 2.4M315.2 5.4l-0.5 2.3M488.2 20.1l-0.9 5.4M18.6 15.0l-0.4 4.7M415.2 15.5l0.8 3.0M448.9 -1.0l-0.8 2.2M113.2 19.0l0.5 4.3M29.8 4.1l0.7 2.4M576.1 16.7l0.5 2.3M395.7 9.3l0.5 2.2M322.5 21.2l0.6 2.5M401.6 11.6l-1.1 3.0M422.3 3.9l0.0 3.0M589.6 6.8l0.9 3.2M523.6 0.9l-0.3 3.2M38.0 5.0l0.5 2.8M71.2 6.1l-0.3 3.9M45.2 -1.7l0.6 6.0M451.8 22.5l-0.9 4.3M406.0 13.7l0.4 5.7M106.1 17.6l0.6 5.3M1.8 19.0l0.7 5.4M178.5 14.5l-0.2 4.1M276.4 14.7l1.0 5.3M186.3 9.1l-0.4 4.3M600.3 10.0l-0.5 4.6M557.6 -1.3l0.4 2.8M53.7 14.5l0.2 3.5M333.9 12.1l-0.9 3.6M560.7 11.7l0.9 2.4M454.6 0.6l-0.3 5.3M454.7 -0.9l-1.0 4.4M505.9 0.8l0.4 5.7M121.7 9.2l0.2 5.4M339.2 15.2l1.1 5.2M22.3 2.6l0.4 5.3M371.2 -0.9l-0.3 2.7M210.3 -1.5l1.2 3.8M91.9 14.8l-0.5 3.1M303.3 7.2l-0.6 3.0M85.4 -1.8l-0.1 5.5M358.3 5.6l-1.0 2.7M194.4 16.2l1.0 4.2M42.7 10.1l-0.5 5.6M14.5 2.1l0.5 3.1M123.9 16.3l0.2 5.9M510.0 19.9l-0.9 3.4M338.3 19.9l1.0 4.6M210.7 10.4l-0.6 4.4M8.6 21.1l1.2 4.3M386.8 16.1l-1.0 3.3M89.9 17.2l0.8 2.4M488.9 5.7l1.1 5.1M175.3 11.1l-0.9 5.8M143.7 16.9l-1.1 2.4M314.3 13.9l0.7 3.4M204.0 20.6l0.6 2.4M258.3 21.0l0.3 5.8M158.7 4.6l-0.6 3.7M478.3 14.1l1.2 3.2M358.8 1.9l0.9 5.5M473.5 18.6l-0.4 3.1M561.3 2.0l0.2 4.7M364.9 20.1l0.9 2.8M187.5 -1.4l1.1 2.4M574.3 1.8l-1.0 4.9M434.4 -1.1l-0.6 4.0M75.9 10.2l-0.2 2.5M431.8 1.7l0.0 5.0M222.8 10.4l-0.4 5.7M609.5 20.1l-0.5 4.9M166.7 -0.3l0.0 2.2M493.9 20.7l0.5 2.2M407.1 11.7l1.1 3.3M247.9 11.2l0.4 4.5M396.2 11.6l0.3 2.9M572.5 9.8l0.1 4.9M139.4 1.6l0.1 5.7M27.3 7.5l0.8 5.3M94.4 15.0l0.0 3.5M233.6 6.5l-1.2 3.5M359.4 -0.6l0.5 2.7M186.0 8.2l0.7 4.6M448.5 7.3l-0.4 4.7M476.9 -1.4l-0.1 4.4M528.9 8.4l0.9 3.9M64.1 0.2l0.2 5.0M350.1 10.8l-1.1 3.7M546.1 18.0l-0.6 5.4M32.8 11.4l-0.1 3.5M350.4 -0.7l0.1 3.3M355.9 6.1l0.7 3.1M30.8 19.6l0.2 2.3M425.2 5.4l0.8 2.8M432.1 1.9l0.5 2.2M526.8 5.3l0.2 2.9M95.7 18.0l-0.3 5.9M239.4 14.0l0.1 2.9M292.6 16.2l0.4 3.7M331.6 5.3l0.6 3.4M609.4 6.6l0.4 5.8M209.9 9.2l0.6 3.0M496.3 5.5l0.1 2.3M347.5 17.7l-0.1 4.4M222.3 7.4l-0.8 4.7M593.2 6.3l0.9 5.4M93.9 0.4l-0.9 5.5M337.7 0.9l-0.8 3.9M319.3 7.2l-0.2 2.8M434.0 3.7l-0.8 5.0M26.0 13.5l0.8 4.8M427.6 1.8l-0.9 3.4M274.3 18.6l0.9 5.1M496.1 4.3l-0.6 5.4M263.8 13.1l-0.4 3.8M222.8 19.1l-0.5 4.5M76.0 15.1l0.8 2.2M319.3 22.7l0.8 2.8M332.1 -2.0l1.1 2.7M227.9 14.5l-0.3 4.5M35.9 18.9l0.1 4.7M473.2 20.3l0.6 4.9M204.9 1.4l0.9 5.8M404.1 5.0l-0.5 5.0M239.7 22.1l0.5 4.8M102.0 12.4l0.7 5.3M107.5 5.8l-0.5 2.2M124.3 6.0l-0.9 3.8M248.2 7.6l-0.6 5.9M427.2 8.3l-0.9 5.2M248.5 21.5l-0.4 5.0M507.6 6.7l0.9 2.7M328.4 14.7l-0.9 5.6M614.1 18.1l0.5 3.4M528.3 6.1l0.3 2.0M131.7 19.0l0.1 5.2M490.2 -1.3l-0.2 4.0M396.9 16.1l-0.2 4.3M605.6 6.2l-1.0 5.9M84.3 9.3l0.5 4.7M215.3 2.7l-0.5 3.6M624.6 5.6l-0.8 2.2M566.4 18.1l-1.0 3.8M500.7 9.9l-0.9 5.3M355.0 10.7l-0.6 2.8M572.6 15.8l1.2 5.8M461.4 7.6l0.8 5.2M8.1 3.4l-0.3 4.3M241.0 0.6l-0.9 4.4M287.5 12.6l0.5 4.5M42.6 16.1l-0.1 2.2M297.2 1.5l0.2 5.6M519.0 13.8l-1.1 5.0M615.0 18.1l-1.1 2.2M316.6 13.5l0.7 4.4M34.2 11.6l-0.2 3.2M469.3 -1.4l0.7 5.3M77.0 14.3l-0.2 2.8M535.3 19.2l-0.3 2.4M451.5 -1.2l0.8 4.7M159.2 5.5l-0.4 3.4M527.2 22.9l-0.5 5.0M231.3 11.4l-0.8 5.9M434.6 22.2l-0.7 2.4M413.4 12.9l-0.5 4.8M42.2 -1.6l-0.9 3.4M280.3 16.2l1.0 2.4M505.8 14.8l-1.2 3.1M113.8 1.6l1.2 2.4M410.9 12.2l-1.0 2.9M87.2 17.7l-0.3 3.0M70.2 4.2l-0.5 5.2M481.8 3.6l-0.7 2.8M230.2 14.0l0.9 3.9M418.1 18.9l-1.1 2.9M73.0 9.5l-1.0 4.8M302.1 2.3l-0.1 2.9M606.4 19.4l1.1 2.4M151.0 2.3l-0.7 5.5M167.1 21.1l0.6 3.8M285.4 5.9l0.4 2.8M75.4 22.6l-0.8 3.9M568.0 0.0l-1.1 2.9M253.3 15.0l1.1 2.1M287.6 3.7l-0.4 5.8M216.2 14.7l-0.3 2.1M521.7 -2.0l-0.6 4.4M354.0 15.8l-0.6 2.6M602.9 4.7l-0.2 5.8M576.3 0.6l-0.5 2.1M508.4 14.3l-0.9 4.1M121.4 -0.1l0.2 5.6M436.0 4.4l-0.3 2.9M426.8 -0.2l0.3 5.0M146.7 8.8l-0.7 5.8M605.8 20.5l0.6 2.9M417.9 17.2l-0.7 2.5M167.6 -1.1l-0.2 2.5M49.0 12.6l0.2 5.8M443.8 8.9l-0.0 2.7M378.7 19.2l0.2 5.5M9.5 11.4l-0.5 4.9M3.0 2.3l-1.2 4.8M167.0 15.8l-1.2 5.9M588.8 22.2l-0.4 2.6M201.7 8.4l-0.6 3.9M165.7 17.8l-0.4 4.9M118.7 21.2l-1.1 4.2M356.0 1.5l0.2 2.8M399.4 4.0l-0.2 3.0M456.4 -1.2l-0.7 4.9M403.1 15.3l1.0 4.5M196.0 14.6l-0.8 3.0M552.7 9.5l-0.9 2.8M66.9 -0.2l-0.0 3.5M389.8 0.6l0.3 3.8M23.5 22.5l-0.9 5.6M32.3 5.2l-0.9 5.1M44.5 2.1l0.8 4.1M109.4 17.1l-0.4 3.7M181.9 9.6l0.6 4.9M122.0 22.0l0.8 2.4M156.2 4.4l1.2 3.9" stroke="#2E4A1A" stroke-width=".9" opacity=".8"/><path d="M74.2 5.7l-0.8 5.3M129.8 15.0l-0.4 3.7M308.0 -1.0l0.6 4.7M551.6 5.8l0.2 4.8M287.4 19.0l-0.1 5.8M38.2 15.5l1.2 4.6M111.0 3.8l-0.0 2.9M165.5 -1.9l-0.3 3.7M600.5 15.3l0.3 4.1M34.0 20.5l0.9 5.1M92.4 11.6l0.1 2.1M511.3 22.6l0.7 5.4M17.6 5.0l0.5 3.0M138.9 3.7l-0.7 2.8M567.2 19.0l0.4 3.9M53.4 14.5l0.7 5.6M301.2 2.5l-0.4 5.2M612.1 7.9l1.1 3.6M107.1 1.2l1.0 2.6M345.7 1.3l1.1 2.1M331.7 21.3l0.9 3.7M133.0 4.3l-0.6 3.2M288.6 12.6l-0.2 5.6M456.9 11.9l0.0 3.3M486.5 10.7l0.6 4.2M279.2 13.3l0.0 4.0M285.0 11.3l1.1 3.9M552.2 21.6l0.1 3.0M151.6 -0.2l0.7 4.7M97.3 15.9l-0.9 4.6M349.1 9.0l-0.4 2.1M322.7 -0.4l0.7 5.9M36.2 15.2l-1.0 3.7M543.5 9.3l0.1 3.4M11.4 4.3l0.6 2.1M119.4 9.9l-0.9 5.7M433.3 22.6l0.8 3.4M605.9 22.3l-0.6 4.2M146.7 12.6l0.6 4.1M451.1 20.0l-0.4 3.6M94.2 16.1l-1.1 4.6M330.0 10.6l0.7 5.3M19.6 1.3l-0.9 3.4M167.3 16.2l0.6 2.8M311.2 7.6l0.4 3.9M325.4 9.6l-0.9 3.9M600.2 1.3l0.0 5.3M216.7 5.9l-1.2 5.4M528.6 1.0l0.5 5.7M182.6 7.3l1.2 3.6M321.9 2.7l1.1 3.5M453.3 -0.8l-0.1 4.9M297.5 6.6l0.6 3.2M174.8 22.2l0.0 2.5M20.3 15.7l-0.1 5.6M0.1 7.8l0.8 5.7M429.7 21.5l0.4 4.9M190.0 9.5l0.3 5.8M299.4 3.9l1.1 3.0M213.0 8.5l-0.7 4.7M565.8 20.1l1.2 4.9M607.5 3.2l0.8 3.4M272.4 -0.8l-0.3 3.9M171.6 21.9l-0.6 4.5M199.4 4.9l0.6 2.0M310.9 21.2l0.7 2.7M228.0 17.6l-0.7 2.3M262.6 13.5l0.6 4.7M418.6 1.0l-0.5 5.4M625.2 10.7l0.7 2.9M624.3 0.6l0.8 3.9M613.0 12.6l-0.3 5.7M438.1 8.2l-0.5 3.1M196.8 12.2l-0.2 3.4M556.2 9.5l-1.2 2.7M317.8 1.6l0.1 3.1M583.5 7.7l0.3 5.6M101.0 17.6l-0.2 2.9M241.7 1.1l0.5 3.0M25.9 12.1l-1.1 5.0M321.4 -1.0l-1.0 4.5M599.0 1.4l1.2 5.4M513.4 2.8l-0.0 5.9M323.0 20.4l-0.7 2.5M141.3 12.6l-0.7 4.4M36.8 17.5l0.1 2.0M89.6 3.0l0.0 4.4M560.3 17.6l-1.2 4.9M66.3 3.8l-0.4 2.2M437.9 19.1l-0.6 4.8M274.7 17.7l-0.6 4.1M554.5 6.2l1.0 3.0M436.5 14.6l-0.1 5.9M439.5 19.4l0.5 3.7M193.9 3.3l-1.0 4.5M89.4 -1.3l0.5 2.2M515.1 18.5l-1.0 5.6M21.7 19.2l0.3 5.2M397.9 5.2l-1.0 2.4M178.0 15.9l-0.4 3.5M135.3 15.5l-0.9 4.0M51.0 17.7l0.7 4.8M559.7 -1.4l-0.6 2.8M205.8 1.9l0.4 5.4M466.8 20.7l0.2 3.7M265.3 3.7l0.9 4.9M197.2 13.7l-0.2 2.4M412.3 17.5l-0.0 3.6M24.0 11.6l0.7 2.6M327.1 0.5l0.1 4.3M597.2 3.3l-0.3 4.7M251.8 -1.7l-0.2 3.7M221.8 4.6l0.6 2.9M354.1 3.6l-0.4 5.9M270.0 13.9l-0.3 4.6M538.3 -0.6l1.0 5.3M147.2 17.4l-0.8 3.4M498.8 2.2l0.3 5.6M436.5 11.3l-0.1 5.0M384.1 15.1l-0.4 5.7M321.7 10.1l-1.1 5.6M317.4 4.8l1.1 4.0M498.9 6.3l-0.5 3.3M399.9 17.6l0.5 2.2M580.5 13.2l0.7 4.6M385.4 13.4l0.5 4.5M429.0 3.3l-0.1 4.7M63.9 2.5l0.7 2.1M413.1 7.2l0.7 5.3M8.9 7.7l1.1 4.4M607.5 15.9l-1.2 2.0M542.4 10.2l-0.3 2.2M406.3 13.7l-0.3 3.7M613.6 15.6l-0.4 5.3M559.5 7.4l0.2 4.7M369.6 18.4l-1.1 5.5M511.4 19.7l-0.5 4.3M348.8 17.9l0.6 2.8M508.1 17.3l0.2 2.9M121.2 2.5l-0.3 4.8M253.6 10.9l-1.1 2.6M490.9 8.6l0.6 5.8M75.5 22.0l0.2 3.0M584.4 3.5l0.9 5.7M88.1 9.2l1.0 2.4M395.8 1.6l-1.1 2.9M309.3 6.0l-0.9 5.6M180.3 4.4l-0.3 2.8M628.8 21.1l-0.5 2.4M508.4 6.5l-1.2 2.6M359.9 1.5l0.6 2.7M172.5 3.2l0.5 4.4M454.6 -0.6l-0.4 5.2M280.8 10.9l0.5 2.5M545.2 6.0l-0.3 4.8M60.8 15.5l-1.2 2.8M363.2 11.1l-1.0 4.8M176.2 1.1l-0.9 3.6M520.4 21.4l-0.2 3.6M151.4 6.4l1.2 3.7M603.5 21.4l-0.2 3.0M13.1 1.5l0.7 5.9M222.0 14.9l0.8 4.5M494.5 15.7l-0.9 5.7M2.7 17.1l-0.0 4.3M360.3 8.4l0.9 5.1M246.1 11.9l-0.4 3.5M91.3 12.4l-1.0 4.3M268.7 20.8l-1.1 2.0M313.3 21.0l0.1 5.1M62.3 7.4l0.1 3.6M554.3 22.1l-0.1 3.9M563.5 15.2l1.2 5.3M626.1 13.9l-0.2 2.2M193.2 15.3l-0.5 2.0M369.3 14.7l-0.0 2.8M167.6 14.2l1.2 4.1M63.1 2.3l0.8 4.1M390.7 4.2l1.0 2.2M198.3 20.5l-0.5 5.3M242.9 8.1l-0.9 2.3M22.0 14.6l-0.8 3.4M526.9 18.1l-0.4 2.6M566.8 12.7l-0.6 3.5M170.4 17.3l0.4 3.5M195.8 7.7l-0.8 2.3M79.5 15.9l-0.2 3.1M396.2 2.5l1.0 2.5M190.9 7.5l-0.5 2.2M274.0 15.1l-1.2 3.4M489.2 5.2l0.8 2.2M471.0 18.7l-1.0 3.1M267.1 21.3l0.6 4.8M442.7 18.1l0.1 3.0M259.3 3.0l-0.9 3.2M354.9 6.3l0.1 5.3M106.6 14.7l-0.1 4.4M273.6 2.7l-1.2 4.2M155.0 1.5l0.7 2.1M186.7 2.6l0.8 4.6M116.3 18.6l-0.3 3.3M232.6 18.8l-1.1 3.0M395.8 18.5l1.0 4.8M311.5 10.5l-0.5 2.6M50.5 15.2l-0.1 2.7M56.5 -1.0l-0.7 3.8M53.6 6.1l1.1 3.8M545.2 22.4l0.3 5.8M37.8 14.9l-0.5 4.4M59.8 11.3l-0.0 3.0M142.7 12.3l0.0 2.5M50.5 8.2l-0.1 2.3M346.9 15.9l-0.9 5.0M604.8 12.1l-0.9 5.1M36.3 3.9l-1.2 3.5M134.3 5.5l-0.2 4.8M391.3 19.8l1.0 4.3M105.8 16.6l0.6 3.4M520.1 1.1l0.6 3.5M13.2 0.8l-0.8 5.2M182.7 15.2l-0.9 3.5M215.7 1.8l0.9 4.0M299.7 2.0l-0.3 5.4M384.8 -0.1l-0.7 3.3M363.5 7.7l-1.2 3.4M165.1 12.2l1.1 4.1M21.5 12.0l0.9 5.1M398.9 13.9l-0.5 3.5M549.9 21.5l-0.5 4.7M465.9 10.7l-0.4 4.5M255.8 -0.5l-0.4 3.3M580.4 12.6l-0.8 2.3M622.1 6.9l-0.2 5.1M251.7 3.0l0.9 4.4M205.9 16.7l-0.2 4.6M212.8 -0.6l-1.1 3.7M339.4 12.7l0.4 4.2M208.4 16.5l0.5 3.0M299.7 14.4l-0.3 5.1M37.9 10.5l-0.8 4.2M230.3 1.7l0.6 2.7M102.1 -1.3l-0.6 5.1M406.6 8.0l-1.1 5.5M491.3 19.6l0.9 2.7M430.1 0.3l1.0 3.4M555.6 22.5l-0.6 2.1M66.1 -1.5l-0.4 6.0M350.7 7.1l0.5 2.0M342.7 11.7l1.2 4.8M452.2 8.0l-0.2 3.3M243.9 7.6l-0.9 3.6M3.3 13.2l-0.6 5.7M237.5 4.0l-0.9 2.8M470.1 19.3l0.2 4.0M147.7 13.7l-0.3 5.0M332.3 18.3l-0.8 3.0M290.0 14.0l0.9 5.3M96.9 4.3l-0.3 2.4M328.5 9.3l-0.3 2.4M437.9 9.2l0.7 3.9M204.1 4.0l-1.0 5.3M541.1 3.0l0.7 3.7M234.1 -0.9l-0.3 3.8M242.8 12.5l-0.7 5.7M476.3 7.5l-0.0 4.1M309.5 10.8l0.4 5.3M253.1 -1.0l0.1 4.7M485.0 1.0l-1.0 2.9M429.0 15.8l-1.1 3.9M263.3 12.6l0.8 6.0M91.7 6.4l-1.2 4.1M173.0 4.6l-0.6 3.3M367.8 7.1l-0.7 5.2M447.7 18.1l-0.1 4.4M280.3 20.0l-0.2 2.2M581.1 12.0l-0.0 5.2M578.3 3.2l-1.0 2.4M599.0 8.4l-0.6 4.6M353.2 1.8l-0.4 5.6M522.0 1.1l1.2 5.7M585.8 0.3l0.9 3.9M340.7 0.2l-0.5 2.6M532.6 3.7l-1.1 5.7M323.4 0.4l-0.9 4.6M80.1 4.0l0.0 5.5M9.5 21.6l0.7 4.0M19.5 7.8l-0.5 4.1M53.1 12.5l0.2 2.9M447.8 -0.4l0.2 3.0M510.6 9.5l-1.2 5.7M259.5 8.2l-0.6 2.4M138.4 6.3l1.2 5.9M302.2 10.4l1.0 5.1M400.9 3.0l0.8 4.5M58.2 15.9l-0.8 3.4M423.8 16.6l0.8 2.5M570.0 16.6l0.7 5.3M605.4 11.3l-0.9 5.8M288.5 3.9l1.0 4.0M447.5 7.8l0.7 5.1M593.3 18.6l-1.0 3.6M526.8 6.5l0.8 4.4M2.8 10.2l-0.9 2.1M170.7 15.5l0.4 3.8M171.0 21.9l-0.7 3.4M384.5 20.3l-0.0 3.6M509.9 4.3l-1.0 3.4M543.2 10.8l1.0 3.5M419.8 -0.1l-0.1 4.5M426.2 20.7l-0.3 4.0M370.2 12.4l-0.3 2.2M265.0 22.5l0.7 4.6M88.1 10.9l-0.8 5.5M609.2 22.1l-0.5 2.7M572.5 9.3l0.3 5.3M198.3 1.8l-0.1 5.0M422.5 16.8l-0.3 3.1M333.5 5.2l-0.6 4.5M26.0 18.7l-0.4 4.3M167.3 4.1l0.1 2.3M406.2 22.2l0.5 4.5M41.5 8.3l0.8 4.0M364.0 8.1l-0.5 4.3M496.7 19.0l0.4 2.6M315.4 20.5l0.6 5.6M408.8 20.0l0.5 2.5M385.8 4.9l0.2 2.3M172.0 3.3l-1.0 2.9M173.3 -0.5l0.1 3.8M25.0 18.7l-0.7 2.4M214.3 6.3l-0.7 4.3M370.9 3.7l1.2 5.5M463.7 10.9l-0.7 3.8M123.9 4.6l0.5 4.2M471.0 21.7l0.5 5.7M39.5 3.1l0.9 2.1M397.0 4.6l-0.8 3.4M96.9 17.4l1.2 3.9M523.1 17.7l-1.1 3.9M336.5 -0.2l0.3 3.3M305.3 14.0l-0.6 2.8M423.9 15.8l0.4 3.0M150.3 22.7l-0.3 2.9M586.3 3.5l1.0 4.7M579.1 4.6l-1.2 2.6M65.4 22.3l-0.8 4.8M102.6 10.8l0.7 2.4M577.3 -1.9l0.1 5.4M615.2 11.7l-1.0 3.4M480.3 1.7l1.1 4.4M4.4 -0.1l0.5 2.5M327.7 9.4l0.3 3.6M577.3 16.3l1.0 5.2M553.2 2.5l-0.1 5.8M279.0 22.5l1.0 4.6M259.8 -1.5l0.9 2.9M207.1 17.3l0.9 5.1M335.2 0.6l-0.4 5.3M409.5 11.5l-0.2 5.8M571.1 -1.7l0.5 3.0M111.1 8.9l0.5 4.7M474.5 4.2l-1.1 3.0M131.8 4.5l0.3 5.9M311.0 22.2l-0.5 4.8M112.1 0.5l-0.2 3.2M524.3 -1.2l-0.7 5.3M570.1 2.0l0.2 4.6M537.1 1.3l-0.3 5.9M42.8 7.0l1.0 3.9M45.1 3.6l0.2 5.0M411.4 10.9l-0.1 2.1M338.4 3.9l0.3 4.0M91.4 18.1l0.6 5.8M231.7 20.6l-0.7 2.7M88.5 2.8l0.2 5.0M300.5 10.8l-0.0 5.8M391.4 3.4l-0.7 5.3M605.0 1.7l0.1 2.5M558.5 -0.6l-0.8 2.9M285.0 8.2l0.4 5.6M609.1 19.8l0.1 3.7M414.6 12.7l1.0 5.2M423.4 18.0l-0.1 2.0M446.7 14.2l1.1 2.7M425.9 2.0l1.1 3.5M526.4 14.1l0.5 4.5M123.7 17.2l-0.6 3.2M52.9 2.1l0.3 2.4M436.4 7.6l-0.6 4.9M505.3 0.4l-0.7 4.3M506.5 17.8l-1.0 2.9M485.9 18.7l1.1 4.9M195.1 5.9l-1.1 4.9M56.2 -0.8l-0.8 4.1M328.4 7.1l0.1 4.9M421.2 3.5l-0.1 3.3M485.3 7.3l1.0 3.8M390.2 5.5l0.6 2.3M275.5 0.1l-1.0 3.6M153.0 22.3l-0.6 2.5M561.8 20.6l1.1 3.9" stroke="#6A8C48" stroke-width=".8" opacity=".7"/><rect width="630" height="23" fill="url(#grassg)"/><defs><linearGradient id="grassg" x1="0" y1="0" x2="0" y2="1"><stop offset="0" stop-color="#000" stop-opacity=".05"/><stop offset="1" stop-color="#000" stop-opacity=".2"/></linearGradient></defs></svg>
<div class="a" style="left:0;top:465.5px;width:630px;height:1.5px;background:#3A4A50"></div>
<div class="a" style="left:0;top:444.5px;width:248px;height:2.8px;background:#7888E0"></div>
<div class="a" style="left:627px;top:0;width:3px;height:467px;background:#FAFAF8"></div><div class="a" style="left:626px;top:444px;width:1px;height:23px;background:#8A887A"></div>
<div class="a" style="left:586px;top:444.5px;width:21px;height:2.5px;background:repeating-linear-gradient(90deg,rgba(220,225,220,.55) 0 2.5px,rgba(0,0,0,0) 2.5px 3.5px)"></div>
</body></html>
